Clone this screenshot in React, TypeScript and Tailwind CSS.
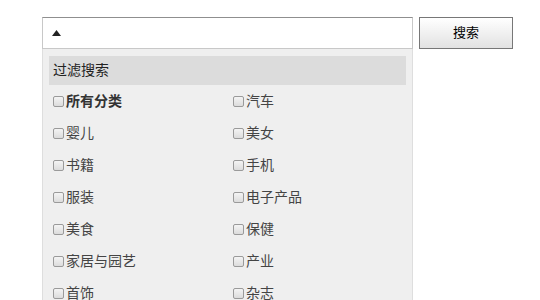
const categories = [
  { name: '所有分类', bold: true },
  { name: '汽车' },
  { name: '婴儿' },
  { name: '美女' },
  { name: '书籍' },
  { name: '手机' },
  { name: '服装' },
  { name: '电子产品' },
  { name: '美食' },
  { name: '保健' },
  { name: '家居与园艺' },
  { name: '产业' },
  { name: '首饰' },
  { name: '杂志' },
]

function Checkbox() {
  return (
    <span className="mr-[2px] inline-block h-[11px] w-[11px] shrink-0 rounded-[2px] border border-[#9a9a9a] bg-gradient-to-b from-[#f4f4f4] to-[#dcdcdc]" />
  )
}

export default function App() {
  return (
    <div
      className="h-[300px] w-[540px] overflow-hidden bg-white pl-[42px] pt-[17px]"
      style={{ fontFamily: '"Liberation Sans", "Noto Sans CJK SC", sans-serif' }}
    >
      <div className="flex gap-[6px]">
        <div className="w-[371px]">
          <div className="flex h-[32px] items-center border border-[#c8c8c8] border-t-[#8f8f8f] bg-white pl-[9px]">
            <svg width="9" height="6" viewBox="0 0 9 6">
              <polygon points="4.5,0 9,6 0,6" fill="#222" />
            </svg>
          </div>
          <div className="border-x border-[#dedede] bg-[#efefef] px-[6px] pt-[7px]">
            <div className="flex h-[29px] items-center bg-[#dcdcdc] pl-[4px] text-[14px] text-[#222]">
              过滤搜索
            </div>
            <div className="grid grid-cols-[180px_1fr] pl-[4px]">
              {categories.map((c) => (
                <label
                  key={c.name}
                  className="flex h-[32px] items-center text-[14px] text-[#444]"
                >
                  <Checkbox />
                  <span className={c.bold ? 'font-bold text-[#333]' : ''}>{c.name}</span>
                </label>
              ))}
            </div>
          </div>
        </div>
        <button className="h-[32px] w-[94px] border border-[#777] bg-gradient-to-b from-white to-[#e2e2e2] text-[13px] text-black">
          搜索
        </button>
      </div>
    </div>
  )
}
